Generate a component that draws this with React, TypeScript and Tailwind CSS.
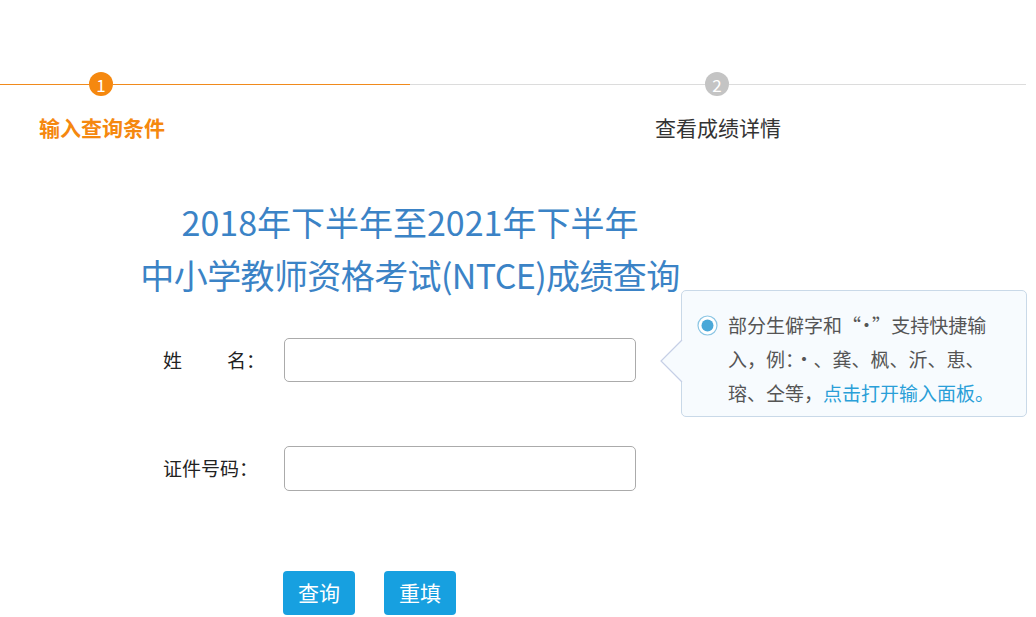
import React from 'react';

const FONT = { fontFamily: '"Noto Sans CJK SC", "Noto Sans", sans-serif' };

const StepCircle: React.FC<{ n: number; active: boolean }> = ({ n, active }) => (
  <div
    className={`w-[24px] h-[24px] rounded-full flex items-center justify-center text-white text-[17px] leading-none shrink-0 ${
      active ? 'bg-[#f5880f]' : 'bg-[#c4c4c4]'
    }`}
  >
    {n}
  </div>
);

const App: React.FC = () => {
  return (
    <div className="w-[1036px] h-[617px] bg-white overflow-hidden" style={FONT}>
      {/* Steps */}
      <div className="pt-[72px] pr-[10px]">
        <div className="flex items-center h-[24px]">
          <div className="w-[89px] h-px bg-[#f08a1c]" />
          <StepCircle n={1} active />
          <div className="w-[297px] h-px bg-[#f08a1c]" />
          <div className="w-[295px] h-px bg-[#dcdcdc]" />
          <StepCircle n={2} active={false} />
          <div className="flex-1 h-px bg-[#dcdcdc]" />
        </div>
        <div className="flex mt-[17px]">
          <div className="w-[204px] text-center text-[21px] leading-[28px] font-bold text-[#f5880f]">输入查询条件</div>
          <div className="ml-[411px] w-[206px] text-center text-[21px] leading-[28px] text-[#333]">查看成绩详情</div>
        </div>
      </div>

      {/* Title */}
      <div className="w-[820px] mt-[54px] text-center text-[34px] leading-[53px] text-[#3b83c6]">
        <div>2018年下半年至2021年下半年</div>
        <div className="tracking-[-0.6px]">中小学教师资格考试(NTCE)成绩查询</div>
      </div>

      {/* Form */}
      <div className="pl-[163px] mt-[37px]">
        <div className="relative flex items-center h-[44px]">
          <div className="w-[121px] text-[19px] text-[#222] flex">
            <span>姓</span>
            <span className="ml-[45px]">名：</span>
          </div>
          <input className="w-[352px] h-[44px] border border-[#ababab] rounded-[5px] outline-none px-2" />

          {/* Hint popover */}
          <div className="absolute left-[518px] top-[-48px] w-[346px] h-[127px] bg-[#f7fbfe] border border-[#c9d9e8] rounded-[5px] pl-[15px] pr-[4px] pt-[17px]">
            <svg className="absolute left-[-22px] top-[48px]" width="23" height="44" viewBox="0 0 23 44">
              <path d="M22 1 L1 22 L22 43" fill="#f7fbfe" stroke="#c6cfe6" strokeWidth="1.2" />
            </svg>
            <div className="flex">
              <svg className="mt-[7px] shrink-0" width="21" height="21" viewBox="0 0 21 21">
                <circle cx="10.5" cy="10.5" r="9.5" fill="#fff" stroke="#8cc6e4" strokeWidth="1.2" />
                <circle cx="10.5" cy="10.5" r="6" fill="#4aa8d8" />
              </svg>
              <div className="ml-[10px] text-[19px] leading-[34px] text-[#555] whitespace-nowrap">
                部分生僻字和<span className="tracking-[-4px]">“·”</span>&nbsp;支持快捷输
                <br />
                入，例：·、龚、枫、沂、恵、
                <br />
                瑢、仝等，<span className="text-[#2a9fd8]">点击打开输入面板。</span>
              </div>
            </div>
          </div>
        </div>

        <div className="flex items-center h-[45px] mt-[64px]">
          <div className="w-[121px] text-[19px] text-[#222]">证件号码：</div>
          <input className="w-[352px] h-[45px] border border-[#ababab] rounded-[5px] outline-none px-2" />
        </div>

        <div className="flex gap-[29px] mt-[80px] pl-[120px]">
          <button className="w-[72px] h-[44px] rounded-[4px] bg-[#17a0e0] text-white text-[21px]">查询</button>
          <button className="w-[72px] h-[44px] rounded-[4px] bg-[#17a0e0] text-white text-[21px]">重填</button>
        </div>
      </div>
    </div>
  );
};

export default App;
